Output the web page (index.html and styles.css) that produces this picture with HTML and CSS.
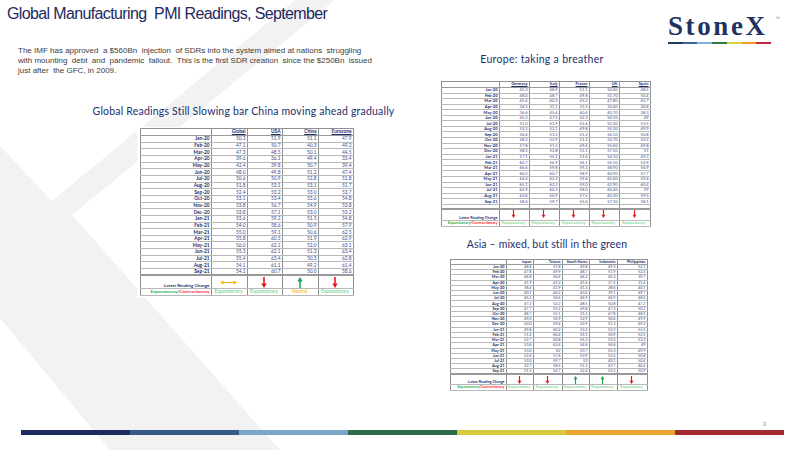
FILE: index.html
```html
<!DOCTYPE html>
<html lang="en">
<head>
<meta charset="utf-8">
<title>Global Manufacturing PMI Readings, September</title>
<link rel="stylesheet" href="styles.css">
</head>
<body>
<div class="slide">
  <svg class="watermark" width="800" height="450" viewBox="0 0 800 450" aria-hidden="true">
    <polygon points="295,0 335,0 72,215 280,450 110,450 0,318 0,146 52,201" fill="#f2f2f2"/>
  </svg>

  <div class="main">
    <div class="left">
      <h1 class="title">Global Manufacturing&nbsp; PMI Readings, September</h1>
      <p class="intro">The IMF has approved &nbsp;a $560Bn &nbsp;injection &nbsp;of SDRs into the system aimed at nations &nbsp;struggling<br>with mounting &nbsp;debt &nbsp;and &nbsp;pandemic &nbsp;fallout. &nbsp;This is the first SDR creation &nbsp;since the $250Bn &nbsp;issued<br>just after &nbsp;the GFC, in 2009.</p>

      <section class="panel panel-global">
        <h2>Global Readings Still Slowing bar China moving ahead gradually</h2>
        <div class="sheet">
          <table class="tbl t-global">
            <colgroup><col class="w71"><col class="w36"><col class="w35"><col class="w36"><col class="w35"></colgroup>
            <tr class="hd"><th></th><th><u>Global</u></th><th><u>USA</u></th><th><u>China</u></th><th><u>Eurozone</u></th></tr>
            <tr><th>Jan-20</th><td>50.3</td><td>51.9</td><td>51.1</td><td>47.9</td></tr>
            <tr><th>Feb-20</th><td>47.1</td><td>50.7</td><td>40.3</td><td>49.2</td></tr>
            <tr><th>Mar-20</th><td>47.3</td><td>48.5</td><td>50.1</td><td>44.5</td></tr>
            <tr><th>Apr-20</th><td>39.6</td><td>36.1</td><td>49.4</td><td>33.4</td></tr>
            <tr><th>May-20</th><td>42.4</td><td>39.8</td><td>50.7</td><td>39.4</td></tr>
            <tr><th>Jun-20</th><td>48.0</td><td>49.8</td><td>51.2</td><td>47.4</td></tr>
            <tr><th>Jul-20</th><td>50.6</td><td>50.9</td><td>52.8</td><td>51.8</td></tr>
            <tr><th>Aug-20</th><td>51.8</td><td>53.1</td><td>53.1</td><td>51.7</td></tr>
            <tr><th>Sep-20</th><td>52.4</td><td>53.2</td><td>53.0</td><td>53.7</td></tr>
            <tr><th>Oct-20</th><td>53.1</td><td>53.4</td><td>53.6</td><td>54.8</td></tr>
            <tr><th>Nov-20</th><td>53.8</td><td>56.7</td><td>54.9</td><td>53.8</td></tr>
            <tr><th>Dec-20</th><td>53.8</td><td>57.1</td><td>53.0</td><td>55.2</td></tr>
            <tr><th>Jan-21</th><td>53.6</td><td>59.2</td><td>51.5</td><td>54.8</td></tr>
            <tr><th>Feb-21</th><td>54.0</td><td>58.6</td><td>50.9</td><td>57.9</td></tr>
            <tr><th>Mar-21</th><td>55.0</td><td>59.1</td><td>50.6</td><td>62.5</td></tr>
            <tr><th>Apr-21</th><td>55.8</td><td>60.5</td><td>51.9</td><td>62.9</td></tr>
            <tr><th>May-21</th><td>56.0</td><td>62.1</td><td>52.0</td><td>63.1</td></tr>
            <tr><th>Jun-21</th><td>55.5</td><td>62.1</td><td>51.3</td><td>63.4</td></tr>
            <tr><th>Jul-21</th><td>55.4</td><td>63.4</td><td>50.3</td><td>62.8</td></tr>
            <tr><th>Aug-21</th><td>54.1</td><td>61.1</td><td>49.2</td><td>61.4</td></tr>
            <tr><th>Sep-21</th><td>54.1</td><td>60.7</td><td>50.0</td><td>58.6</td></tr>
            <tr class="latest"><th>Latest Reading Change</th>
              <td><svg class="arr-h" viewBox="0 0 17 5"><path d="M3 2.5H14" stroke="#f5b400" stroke-width="1"/><path d="M0 2.5L3.5 0.6V4.4Z M17 2.5L13.5 0.6V4.4Z" fill="#f5b400"/></svg></td>
              <td><svg class="arr" viewBox="0 0 6 11"><path d="M3 0V7" stroke="#e8161e" stroke-width="1.6"/><path d="M0.3 6.5H5.7L3 11Z" fill="#e8161e"/></svg></td>
              <td><svg class="arr" viewBox="0 0 6 11"><path d="M3 11V4" stroke="#1fa24a" stroke-width="1.6"/><path d="M0.3 4.5H5.7L3 0Z" fill="#1fa24a"/></svg></td>
              <td><svg class="arr" viewBox="0 0 6 11"><path d="M3 0V7" stroke="#e8161e" stroke-width="1.6"/><path d="M0.3 6.5H5.7L3 11Z" fill="#e8161e"/></svg></td>
            </tr>
            <tr class="exp"><th><span class="g">Expansionary</span>/<span class="r">Contractionary</span></th><td>Expansionary</td><td>Expansionary</td><td class="neutral">Neutral</td><td>Expansionary</td></tr>
          </table>
        </div>
      </section>
    </div>

    <div class="right">
      <div class="logo">
        <div class="logo-word">StoneX<span class="tm">™</span></div>
        <div class="logo-stripes"><span class="s1"></span><span class="s2"></span><span class="s3"></span><span class="s4"></span><span class="s5"></span><span class="s6"></span><span class="s7"></span></div>
      </div>

      <section class="panel panel-europe">
        <h2>Europe: taking a breather</h2>
        <div class="sheet sheet-plain">
          <table class="tbl t-europe">
            <colgroup><col class="w58"><col class="w30"><col class="w30"><col class="w30"><col class="w30"><col class="w31"></colgroup>
            <tr class="hd"><th></th><th><u>Germany</u></th><th><u>Italy</u></th><th><u>France</u></th><th><u>UK</u></th><th><u>Spain</u></th></tr>
            <tr><th>Jan-20</th><td>45.3</td><td>48.9</td><td>51.1</td><td>50.00</td><td>48.5</td></tr>
            <tr><th>Feb-20</th><td>48.0</td><td>48.7</td><td>49.8</td><td>51.70</td><td>50.4</td></tr>
            <tr><th>Mar-20</th><td>45.4</td><td>40.3</td><td>43.2</td><td>47.80</td><td>45.7</td></tr>
            <tr><th>Apr-20</th><td>34.5</td><td>31.1</td><td>31.5</td><td>32.60</td><td>30.8</td></tr>
            <tr><th>May-20</th><td>36.6</td><td>45.4</td><td>40.6</td><td>40.70</td><td>38.3</td></tr>
            <tr><th>Jun-20</th><td>45.2</td><td>47.5</td><td>52.3</td><td>50.10</td><td>49</td></tr>
            <tr><th>Jul-20</th><td>51.0</td><td>51.9</td><td>52.4</td><td>53.30</td><td>53.5</td></tr>
            <tr><th>Aug-20</th><td>52.2</td><td>53.1</td><td>49.8</td><td>55.20</td><td>49.9</td></tr>
            <tr><th>Sep-20</th><td>56.4</td><td>53.2</td><td>51.2</td><td>54.10</td><td>50.8</td></tr>
            <tr><th>Oct-20</th><td>58.2</td><td>53.9</td><td>51.3</td><td>53.70</td><td>52.5</td></tr>
            <tr><th>Nov-20</th><td>57.8</td><td>51.5</td><td>49.6</td><td>55.60</td><td>49.8</td></tr>
            <tr><th>Dec-20</th><td>58.3</td><td>52.8</td><td>51.1</td><td>57.50</td><td>51</td></tr>
            <tr><th>Jan-21</th><td>57.1</td><td>55.1</td><td>51.6</td><td>54.10</td><td>49.3</td></tr>
            <tr><th>Feb-21</th><td>60.7</td><td>56.9</td><td>56.1</td><td>55.10</td><td>52.9</td></tr>
            <tr><th>Mar-21</th><td>66.6</td><td>59.8</td><td>59.3</td><td>58.90</td><td>56.9</td></tr>
            <tr><th>Apr-21</th><td>66.2</td><td>60.7</td><td>58.9</td><td>60.90</td><td>57.7</td></tr>
            <tr><th>May-21</th><td>64.4</td><td>62.3</td><td>59.4</td><td>65.60</td><td>59.4</td></tr>
            <tr><th>Jun-21</th><td>65.1</td><td>62.2</td><td>59.0</td><td>63.90</td><td>60.4</td></tr>
            <tr><th>Jul-21</th><td>65.9</td><td>60.3</td><td>58.0</td><td>60.40</td><td>59</td></tr>
            <tr><th>Aug-21</th><td>62.6</td><td>60.9</td><td>57.5</td><td>60.30</td><td>59.5</td></tr>
            <tr><th>Sep-21</th><td>58.4</td><td>59.7</td><td>55.0</td><td>57.10</td><td>58.1</td></tr>
            <tr class="blank"><th></th><td></td><td></td><td></td><td></td><td></td></tr>
            <tr class="latest"><th>Latest Reading Change</th>
              <td><svg class="arr" viewBox="0 0 6 11"><path d="M3 0V7" stroke="#e8161e" stroke-width="1.6"/><path d="M0.3 6.5H5.7L3 11Z" fill="#e8161e"/></svg></td>
              <td><svg class="arr" viewBox="0 0 6 11"><path d="M3 0V7" stroke="#e8161e" stroke-width="1.6"/><path d="M0.3 6.5H5.7L3 11Z" fill="#e8161e"/></svg></td>
              <td><svg class="arr" viewBox="0 0 6 11"><path d="M3 0V7" stroke="#e8161e" stroke-width="1.6"/><path d="M0.3 6.5H5.7L3 11Z" fill="#e8161e"/></svg></td>
              <td><svg class="arr" viewBox="0 0 6 11"><path d="M3 0V7" stroke="#e8161e" stroke-width="1.6"/><path d="M0.3 6.5H5.7L3 11Z" fill="#e8161e"/></svg></td>
              <td><svg class="arr" viewBox="0 0 6 11"><path d="M3 0V7" stroke="#e8161e" stroke-width="1.6"/><path d="M0.3 6.5H5.7L3 11Z" fill="#e8161e"/></svg></td>
            </tr>
            <tr class="exp"><th><span class="g">Expansionary</span>/<span class="r">Contractionary</span></th><td>Expansionary</td><td>Expansionary</td><td>Expansionary</td><td>Expansionary</td><td>Expansionary</td></tr>
          </table>
        </div>
      </section>

      <section class="panel panel-asia">
        <h2>Asia – mixed, but still in the green</h2>
        <div class="sheet sheet-plain">
          <table class="tbl t-asia">
            <colgroup><col class="w56"><col class="w27"><col class="w29"><col class="w27"><col class="w28"><col class="w30"></colgroup>
            <tr class="hd"><th></th><th>Japan</th><th>Taiwan</th><th>South Korea</th><th>Indonesia</th><th>Philippines</th></tr>
            <tr><th>Jan-20</th><td>48.8</td><td>51.8</td><td>49.8</td><td>49.3</td><td>52.1</td></tr>
            <tr><th>Feb-20</th><td>47.8</td><td>49.9</td><td>48.7</td><td>51.9</td><td>52.3</td></tr>
            <tr><th>Mar-20</th><td>44.8</td><td>50.4</td><td>44.2</td><td>45.3</td><td>39.7</td></tr>
            <tr><th>Apr-20</th><td>41.9</td><td>42.2</td><td>41.6</td><td>27.5</td><td>31.6</td></tr>
            <tr><th>May-20</th><td>38.4</td><td>41.9</td><td>41.3</td><td>28.6</td><td>40.1</td></tr>
            <tr><th>Jun-20</th><td>40.1</td><td>46.2</td><td>43.4</td><td>39.1</td><td>49.7</td></tr>
            <tr><th>Jul-20</th><td>45.2</td><td>50.6</td><td>46.9</td><td>46.9</td><td>48.4</td></tr>
            <tr><th>Aug-20</th><td>47.2</td><td>52.2</td><td>48.5</td><td>50.8</td><td>47.3</td></tr>
            <tr><th>Sep-20</th><td>47.7</td><td>55.2</td><td>49.8</td><td>47.2</td><td>50.1</td></tr>
            <tr><th>Oct-20</th><td>48.7</td><td>55.1</td><td>51.2</td><td>47.8</td><td>48.5</td></tr>
            <tr><th>Nov-20</th><td>49.0</td><td>56.9</td><td>52.9</td><td>50.6</td><td>49.9</td></tr>
            <tr><th>Dec-20</th><td>50.0</td><td>59.4</td><td>52.9</td><td>51.3</td><td>49.2</td></tr>
            <tr><th>Jan-21</th><td>49.8</td><td>60.2</td><td>53.2</td><td>52.2</td><td>52.5</td></tr>
            <tr><th>Feb-21</th><td>51.4</td><td>60.4</td><td>55.3</td><td>50.9</td><td>52.5</td></tr>
            <tr><th>Mar-21</th><td>52.7</td><td>60.8</td><td>55.3</td><td>53.2</td><td>52.2</td></tr>
            <tr><th>Apr-21</th><td>53.6</td><td>62.4</td><td>54.6</td><td>54.6</td><td>49</td></tr>
            <tr><th>May-21</th><td>53.0</td><td>62</td><td>53.7</td><td>55.3</td><td>49.9</td></tr>
            <tr><th>Jun-21</th><td>52.4</td><td>57.6</td><td>53.9</td><td>53.5</td><td>50.8</td></tr>
            <tr><th>Jul-21</th><td>53.0</td><td>59.7</td><td>53</td><td>40.1</td><td>50.4</td></tr>
            <tr><th>Aug-21</th><td>52.7</td><td>58.5</td><td>51.2</td><td>43.7</td><td>46.4</td></tr>
            <tr><th>Sep-21</th><td>51.5</td><td>54.7</td><td>52.4</td><td>52.2</td><td>50.9</td></tr>
            <tr class="latest"><th>Latest Reading Change</th>
              <td><svg class="arr" viewBox="0 0 6 11"><path d="M3 0V7" stroke="#e8161e" stroke-width="1.6"/><path d="M0.3 6.5H5.7L3 11Z" fill="#e8161e"/></svg></td>
              <td><svg class="arr" viewBox="0 0 6 11"><path d="M3 0V7" stroke="#e8161e" stroke-width="1.6"/><path d="M0.3 6.5H5.7L3 11Z" fill="#e8161e"/></svg></td>
              <td><svg class="arr" viewBox="0 0 6 11"><path d="M3 11V4" stroke="#1fa24a" stroke-width="1.6"/><path d="M0.3 4.5H5.7L3 0Z" fill="#1fa24a"/></svg></td>
              <td><svg class="arr" viewBox="0 0 6 11"><path d="M3 11V4" stroke="#1fa24a" stroke-width="1.6"/><path d="M0.3 4.5H5.7L3 0Z" fill="#1fa24a"/></svg></td>
              <td><svg class="arr" viewBox="0 0 6 11"><path d="M3 0V7" stroke="#e8161e" stroke-width="1.6"/><path d="M0.3 6.5H5.7L3 11Z" fill="#e8161e"/></svg></td>
            </tr>
            <tr class="exp"><th><span class="g">Expansionary</span>/<span class="r">Contractionary</span></th><td>Expansionary</td><td>Expansionary</td><td>Expansionary</td><td>Expansionary</td><td>Expansionary</td></tr>
          </table>
        </div>
      </section>
    </div>
  </div>

  <footer class="footer">
    <div class="pageno">3</div>
    <div class="bar"><span class="s1"></span><span class="s2"></span><span class="s3"></span><span class="s4"></span><span class="s5"></span><span class="s6"></span><span class="s7"></span></div>
  </footer>
</div>
</body>
</html>
```

FILE: styles.css
```css
body { margin: 0; background: #fff; }

.slide {
  position: relative;
  width: 800px;
  height: 450px;
  overflow: hidden;
  background: #fff;
  display: flex;
  flex-direction: column;
  font-family: "Liberation Sans", Arial, sans-serif;
}

.watermark { position: absolute; left: 0; top: 0; z-index: 0; }

.main {
  position: relative;
  z-index: 1;
  display: grid;
  grid-template-columns: 430px 370px;
  height: 420px;
}

.left, .right {
  display: flex;
  flex-direction: column;
  align-items: flex-start;
}

.title {
  margin: 4px 0 0 7px;
  font: 400 16px/20px "Liberation Sans", Arial, sans-serif;
  letter-spacing: -0.63px;
  color: #1d2a62;
  white-space: nowrap;
}

.intro {
  margin: 22.4px 0 0 18px;
  font: 400 8px/10px "Liberation Sans", Arial, sans-serif;
  color: #3c3c3c;
  white-space: nowrap;
}

/* panels */
.panel { display: flex; flex-direction: column; align-items: center; }
.panel h2 {
  margin: 0;
  font: 400 10.5px/12px Lato, "Noto Sans", sans-serif;
  color: #1c2f6e;
  white-space: nowrap;
}
.panel-global { margin: 28.6px 0 0 137px; width: 217px; }
.panel-global h2 { letter-spacing: 0.2px; padding-right: 4px; }
.panel-europe { margin: 9.5px 0 0 11px; width: 209px; }
.panel-europe h2 { letter-spacing: 0.3px; padding-right: 7px; }
.panel-asia { margin: 11.5px 0 0 20px; width: 197px; }
.panel-asia h2 { letter-spacing: 0.15px; padding-right: 3px; }

.sheet { background: #fff; padding: 1px 1px 2px 3px; margin-top: 10px; }
.panel-europe .sheet { padding: 0; margin-top: 15.8px; }
.panel-asia .sheet { padding: 0; margin-top: 8.5px; }

/* logo */
.logo { margin: 13.4px 0 0 238px; }
.logo-word {
  font: 700 27px/27px "Liberation Serif", "Times New Roman", serif;
  color: #1e3361;
  letter-spacing: 2.6px;
  white-space: nowrap;
  position: relative;
}
.tm {
  position: absolute;
  top: 3px;
  right: -9px;
  font: 400 5px/5px "Liberation Sans", Arial, sans-serif;
  color: #8a8a8a;
  letter-spacing: 0;
}
.logo-stripes { display: flex; width: 103px; height: 2px; margin-top: 1.3px; }
.logo-stripes span { flex: 1; }
.logo-stripes .s1 { background: #1f3a5f; }
.logo-stripes .s2 { background: #3b62a3; }
.logo-stripes .s3 { background: #7fb0d9; }
.logo-stripes .s4 { background: #2e7a4e; }
.logo-stripes .s5 { background: #d8d43a; }
.logo-stripes .s6 { background: #f2a21e; }
.logo-stripes .s7 { background: #c0283a; }

/* tables */
.tbl {
  border-collapse: collapse;
  table-layout: fixed;
  font-family: Lato, "Noto Sans", sans-serif;
  border: 1px solid #8f8f8f;
  background: #fff;
}
.tbl th, .tbl td {
  padding: 0 1px 0 0;
  text-align: right;
  vertical-align: middle;
  white-space: nowrap;
  overflow: hidden;
  border-right: 1px solid #8f8f8f;
  border-bottom: 1px solid #b8b8b8;
}
.tbl th { font-weight: 700; color: #1e2c6b; }
.tbl td { font-weight: 400; color: #3a4b8e; }
.tbl tr.hd th { border-bottom: 1px solid #9a9a9a; }
.tbl u { text-decoration: underline; text-decoration-thickness: 0.5px; }
.tbl tr.latest td { text-align: center; vertical-align: middle; border-top: 2px solid #9a9a9a; }
.tbl tr.latest th { vertical-align: bottom; border-top: 2px solid #9a9a9a; }
.tbl tr.latest svg { display: block; margin: 0 auto; }
.tbl tr.exp td { text-align: center; color: #5ccc7e; }
.tbl tr.exp td.neutral { color: #f2b500; }
.tbl tr.exp .g { color: #1fae4b; }
.tbl tr.exp .r { color: #ff1e1e; }

/* global table */
.w71 { width: 71px; } .w36 { width: 36px; } .w35 { width: 35px; }
.t-global { width: 213px; }
.t-global th, .t-global td { font-size: 4.8px; line-height: 5px; }
.t-global tr { height: 6.67px; }
.t-global tr.hd { height: 7px; }
.t-global tr.latest { height: 13px; }
.t-global tr.exp { height: 7px; }
.t-global tr.latest th, .t-global tr.exp th { font-size: 4.5px; }
.t-global .arr { width: 6px; height: 11px; margin-left: 3px; }
.t-global .arr-h { width: 17px; height: 5px; }

/* europe table */
.w58 { width: 58px; } .w30 { width: 30px; } .w31 { width: 31px; }
.t-europe { width: 209px; }
.t-europe th, .t-europe td { font-size: 4px; line-height: 4px; }
.t-europe tr { height: 5.57px; }
.t-europe tr.hd { height: 6px; }
.t-europe tr.blank { height: 5px; }
.t-europe tr.blank td, .t-europe tr.blank th { border-bottom: 2px solid #9a9a9a; }
.t-europe tr.latest { height: 11px; }
.t-europe tr.latest td, .t-europe tr.latest th { border-top: 0; }
.t-europe tr.latest td { vertical-align: top; }
.t-europe tr.exp { height: 6px; }
.t-europe tr.latest th, .t-europe tr.exp th { font-size: 3.8px; }
.t-europe .arr { width: 5px; height: 8px; margin-top: 1px; }

/* asia table */
.w56 { width: 56px; } .w27 { width: 27px; } .w29 { width: 29px; } .w28 { width: 28px; }
.t-asia { width: 197px; }
.t-asia th, .t-asia td { font-size: 3.8px; line-height: 4px; }
.t-asia tr { height: 5.24px; }
.t-asia tr.hd { height: 5px; }
.t-asia tr.latest { height: 10px; }
.t-asia tr.exp { height: 6px; }
.t-asia tr.latest th, .t-asia tr.exp th { font-size: 3.6px; }
.t-asia .arr { width: 5px; height: 8px; }

/* footer */
.footer {
  position: relative;
  z-index: 1;
  margin-top: auto;
  padding: 0 16px 15px 21px;
}
.pageno {
  text-align: right;
  font: 400 6px/8px "Liberation Sans", Arial, sans-serif;
  color: #8c8c8c;
  padding-right: 18px;
  margin-bottom: 2px;
}
.bar { display: flex; height: 5px; }
.bar span { flex: 1; }
.bar .s1 { background: #1f2a5e; }
.bar .s2 { background: #345a85; }
.bar .s3 { background: #7aa7c8; }
.bar .s4 { background: #2d6b4a; }
.bar .s5 { background: #d7c93a; }
.bar .s6 { background: #e8a530; }
.bar .s7 { background: #a4282f; }
```
